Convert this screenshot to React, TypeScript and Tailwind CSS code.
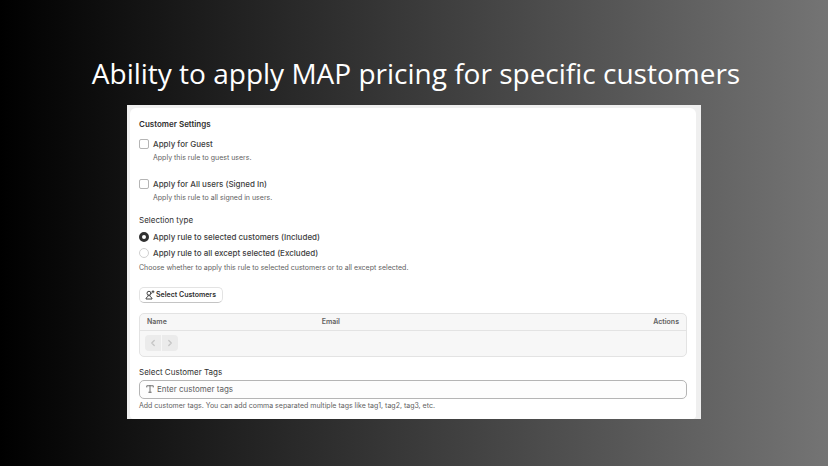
import React, { useState } from 'react';

const userOptions = [
  { id: 'guest', label: 'Apply for Guest', help: 'Apply this rule to guest users.' },
  { id: 'all-users', label: 'Apply for All users (Signed In)', help: 'Apply this rule to all signed in users.' },
];

const selectionOptions = [
  { id: 'included', label: 'Apply rule to selected customers (Included)' },
  { id: 'excluded', label: 'Apply rule to all except selected (Excluded)' },
];

function PersonAddIcon() {
  return (
    <svg viewBox="0 0 20 20" className="w-2.5 h-2.5 shrink-0" fill="none" stroke="currentColor" strokeWidth="1.8" strokeLinecap="round" strokeLinejoin="round">
      <circle cx="8" cy="6.5" r="4" />
      <path d="M6.500 10.500 6 13C3.500 14 2 15.500 2 18h12c0-2.500-1.500-4-4-5l-.5-2.500" />
      <path d="M16 1.500v4M14 3.500h4" />
    </svg>
  );
}

function TextIcon() {
  return (
    <svg viewBox="0 0 16 16" className="w-2 h-2 shrink-0" fill="none" stroke="currentColor" strokeWidth="1.8" strokeLinecap="round" strokeLinejoin="round">
      <path d="M1.500 4V1.500h13V4M8 1.500v13M5.500 14.500h5" />
    </svg>
  );
}

function Chevron({ d }: { d: string }) {
  return (
    <svg viewBox="0 0 12 12" className="w-2.5 h-2.5" fill="none" stroke="currentColor" strokeWidth="1.5" strokeLinecap="round" strokeLinejoin="round">
      <path d={d} />
    </svg>
  );
}

export default function App() {
  const [checked, setChecked] = useState<Record<string, boolean>>({});
  const [selection, setSelection] = useState('included');
  const [tags, setTags] = useState('');

  return (
    <main className="min-h-screen bg-linear-to-r/srgb from-black to-[#747474] px-4 pt-[53px] pb-12">
      <h1 className="mb-3 pl-1 text-center text-[28px] leading-10 text-white font-['Open_Sans',sans-serif]">
        Ability to apply MAP pricing for specific customers
      </h1>

      <div className="mx-auto w-full max-w-[574px] bg-[#efefef] pl-[3px] pr-[5px] pt-[3px] font-['Inter',sans-serif] text-[7px] leading-3 text-[#616161]">
        <section className="rounded-t-md rounded-b-sm bg-white pt-2.5 pb-[7px] px-[9px]">
          <h2 className="text-[8px] font-semibold text-[#303030]">Customer Settings</h2>

          <div className="mt-2 flex flex-col gap-3.5">
            {userOptions.map(o => (
              <div key={o.id}>
                <div className="flex items-center gap-1">
                  <input
                    id={o.id}
                    type="checkbox"
                    checked={!!checked[o.id]}
                    onChange={e => setChecked(prev => ({ ...prev, [o.id]: e.target.checked }))}
                    className="w-2.5 h-2.5 shrink-0 appearance-none rounded-xs border border-[#b5b5b5] bg-white checked:bg-[#303030]"
                  />
                  <label htmlFor={o.id} className="text-[8px] font-medium text-[#404040]">{o.label}</label>
                </div>
                <p className="mt-0.5 pl-3.5">{o.help}</p>
              </div>
            ))}
          </div>

          <fieldset className="mt-2.5">
            <legend className="text-[8px] text-[#303030]">Selection type</legend>
            <div className="mt-[5px] flex flex-col gap-1">
              {selectionOptions.map(o => (
                <div key={o.id} className="flex items-center gap-1">
                  <input
                    id={o.id}
                    type="radio"
                    name="selection"
                    checked={selection === o.id}
                    onChange={() => setSelection(o.id)}
                    className="w-2.5 h-2.5 shrink-0 appearance-none rounded-full border border-[#d0d0d0] bg-white checked:border-3 checked:border-[#303030]"
                  />
                  <label htmlFor={o.id} className="text-[8px] font-medium text-[#404040]">{o.label}</label>
                </div>
              ))}
            </div>
            <p className="mt-[3px]">Choose whether to apply this rule to selected customers or to all except selected.</p>
          </fieldset>

          <button className="mt-[13px] flex h-4 items-center gap-px rounded-[5px] border border-[#e3e3e3] border-b-[#c4c4c4] bg-white pl-[5px] pr-1.5 text-[7px] font-semibold text-[#303030]">
            <PersonAddIcon />
            Select Customers
          </button>

          <div className="mt-2.5 rounded-[5px] border border-[#e3e3e3] bg-[#f7f7f7]">
            <table className="w-full table-fixed text-left">
              <thead>
                <tr className="h-4 border-b border-[#e3e3e3]">
                  <th className="w-[32%] pl-[7px] font-semibold">Name</th>
                  <th className="pl-[7px] font-semibold">Email</th>
                  <th className="pr-[7px] text-right font-semibold">Actions</th>
                </tr>
              </thead>
            </table>
            <div className="flex gap-px px-[5px] pt-1 pb-[5px] text-[#c4c4c4]">
              <button disabled aria-label="Previous" className="flex h-4 w-4 items-center justify-center rounded-l bg-[#ebebeb]">
                <Chevron d="M7.500 3 4.500 6l3 3" />
              </button>
              <button disabled aria-label="Next" className="flex h-4 w-4 items-center justify-center rounded-r bg-[#ebebeb]">
                <Chevron d="M4.500 3l3 3-3 3" />
              </button>
            </div>
          </div>

          <label htmlFor="tags" className="mt-[9px] block text-[8px] text-[#303030]">Select Customer Tags</label>
          <div className="mt-0.5 flex h-[19px] items-center gap-[3px] rounded-[5px] border border-[#b5b5b5] bg-[#fdfdfd] px-1.5">
            <TextIcon />
            <input
              id="tags"
              value={tags}
              onChange={e => setTags(e.target.value)}
              placeholder="Enter customer tags"
              className="min-w-0 flex-1 bg-transparent text-[8px] text-[#303030] outline-none placeholder:text-[#616161]"
            />
          </div>
          <p className="mt-px">Add customer tags. You can add comma separated multiple tags like tag1, tag2, tag3, etc.</p>
        </section>
      </div>
    </main>
  );
}
